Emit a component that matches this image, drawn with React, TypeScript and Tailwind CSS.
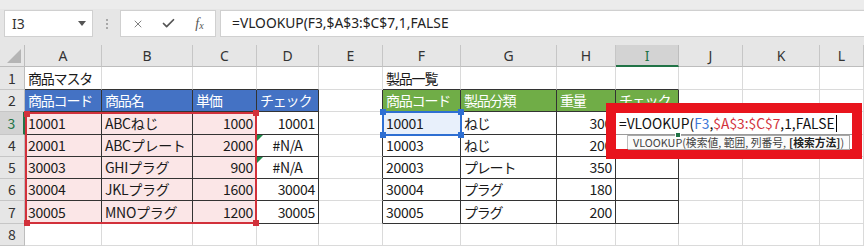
import { X, Check } from 'lucide-react';

const COLS = ['A', 'B', 'C', 'D', 'E', 'F', 'G', 'H', 'I', 'J', 'K', 'L'];

// rows 1..8, columns A..L
const ROWS: string[][] = [
  ['商品マスタ', '', '', '', '', '製品一覧'],
  ['商品コード', '商品名', '単価', 'チェック', '', '商品コード', '製品分類', '重量', 'チェック'],
  ['10001', 'ABCねじ', '1000', '10001', '', '10001', 'ねじ', '300'],
  ['20001', 'ABCプレート', '2000', '#N/A', '', '10003', 'ねじ', '200'],
  ['30003', 'GHIプラグ', '900', '#N/A', '', '20003', 'プレート', '350'],
  ['30004', 'JKLプラグ', '1600', '30004', '', '30004', 'プラグ', '180'],
  ['30005', 'MNOプラグ', '1200', '30005', '', '30005', 'プラグ', '200'],
  [],
];

const CELL_FONT = "font-['Noto_Sans_CJK_JP',sans-serif]";
const UI_FONT = "font-['Noto_Sans','Noto_Sans_CJK_JP',sans-serif]";

function Corner() {
  return (
    <div className="bg-[#e6e6e6] border-r border-b border-[#bdbdbd] flex items-end justify-end p-[3px]">
      <svg width="14" height="14" viewBox="0 0 14 14">
        <polygon points="14,0 14,14 0,14" fill="#b5b5b5" />
      </svg>
    </div>
  );
}

function ColHead({ label }: { label: string }) {
  const sel = label === 'I';
  return (
    <div
      className={
        sel
          ? 'bg-[#d3d3d3] text-[#217346] border-r border-r-[#bdbdbd] border-b-2 border-b-[#217346] flex items-center justify-center text-[14px]'
          : 'bg-[#e6e6e6] text-[#333] border-r border-r-[#c6c6c6] border-b border-b-[#bdbdbd] flex items-center justify-center text-[14px]'
      }
    >
      {label}
    </div>
  );
}

function RowHead({ r }: { r: number }) {
  const sel = r === 3;
  return (
    <div
      className={
        sel
          ? 'bg-[#d3d3d3] text-[#217346] border-r-2 border-r-[#217346] border-b border-b-[#c6c6c6] flex items-center justify-center text-[14px]'
          : 'bg-[#e6e6e6] text-[#333] border-r border-r-[#bdbdbd] border-b border-b-[#c6c6c6] flex items-center justify-center text-[14px]'
      }
    >
      {r}
    </div>
  );
}

function DataCell({ r, ci }: { r: number; ci: number }) {
  const text = ROWS[r - 1][ci] ?? '';
  const body = r >= 2 && r <= 7;
  const darkR = body && ci <= 8;
  const darkB = r <= 7 && (ci <= 3 || (ci >= 5 && ci <= 8));

  let bg = 'bg-white';
  let fg = 'text-[#1a1a1a]';
  if (r === 2 && ci <= 3) {
    bg = 'bg-[#4472c4]';
    fg = 'text-white';
  } else if (r === 2 && ci >= 5 && ci <= 8) {
    bg = 'bg-[#70ad47]';
    fg = 'text-white';
  } else if (r >= 3 && r <= 7 && ci <= 2) {
    bg = 'bg-[#fbe6e7]';
  } else if (r === 3 && ci === 5) {
    bg = 'bg-[#e8f0fb]';
  }

  const isErr = text === '#N/A';
  const right = r >= 3 && (ci === 2 || ci === 7 || (ci === 3 && !isErr));
  const align = isErr ? 'justify-center' : right ? 'justify-end' : 'justify-start';
  const onlyJa = /^[^\x00-\x7f]+$/.test(text);

  return (
    <div
      className={`relative flex items-center px-[3px] whitespace-nowrap overflow-hidden border-r border-b text-[14px] ${bg} ${fg} ${align} ${
        darkR ? 'border-r-[#333]' : 'border-r-[#dadada]'
      } ${darkB ? 'border-b-[#333]' : 'border-b-[#dadada]'} ${onlyJa ? 'tracking-[-1.2px]' : 'tracking-[-0.3px]'}`}
    >
      {isErr && (
        <svg className="absolute left-0 top-0" width="6" height="6" viewBox="0 0 6 6">
          <polygon points="0,0 6,0 0,6" fill="#1e8a4a" />
        </svg>
      )}
      {text}
    </div>
  );
}

function Handle({ className }: { className: string }) {
  return <div className={`absolute w-[6px] h-[6px] ${className}`} />;
}

export default function App() {
  return (
    <div className={`relative w-[864px] h-[246px] overflow-hidden bg-white ${UI_FONT}`}>
      {/* formula bar */}
      <div className="h-[45px] bg-[#e6e6e6] border-t-[9px] border-t-[#ececec] flex items-start pt-px pl-[4px]">
        <div className="w-[89px] h-[27px] bg-white border border-[#d0d0d0] flex items-center justify-between pl-[7px] pr-[6px] text-[14px] text-[#333]">
          <span>I3</span>
          <svg width="8" height="5" viewBox="0 0 8 5">
            <polygon points="0,0 8,0 4,5" fill="#555" />
          </svg>
        </div>
        <div className="w-[27px] h-[27px] flex flex-col items-center justify-center gap-[2px]">
          <span className="w-[2px] h-[2px] bg-[#a8a8a8]" />
          <span className="w-[2px] h-[2px] bg-[#a8a8a8]" />
          <span className="w-[2px] h-[2px] bg-[#a8a8a8]" />
        </div>
        <div className="w-[96px] h-[27px] bg-white border border-[#d0d0d0] flex items-center pl-px text-[#555]">
          <div className="w-[32px] flex justify-center">
            <X size={12} strokeWidth={1.5} />
          </div>
          <div className="w-[32px] flex justify-center">
            <Check size={15} strokeWidth={2.8} />
          </div>
          <div className="w-[32px] flex justify-center items-center font-['Liberation_Serif',serif] italic text-[14px] text-[#555]">
            f<span className="text-[10px] mt-[3px]">x</span>
          </div>
        </div>
        <div className="ml-[4px] flex-1 -mr-[2px] h-[27px] bg-white border border-[#d0d0d0] flex items-center pl-[11px] text-[13.8px] text-[#222]">
          =VLOOKUP(F3,$A$3:$C$7,1,FALSE
        </div>
      </div>

      {/* sheet grid */}
      <div className="grid grid-cols-[25px_77px_91px_64px_62px_64px_78px_96px_59px_63px_64px_77px_1fr] grid-rows-[22px_23px_22px_23px_22px_22px_22px_23px_1fr] h-[201px]">
        <Corner />
        {COLS.map((c) => (
          <ColHead key={c} label={c} />
        ))}
        {ROWS.map((_, ri) => (
          <div key={ri} className={`contents ${CELL_FONT}`}>
            <RowHead r={ri + 1} />
            {COLS.map((c, ci) => (
              <DataCell key={c} r={ri + 1} ci={ci} />
            ))}
          </div>
        ))}
      </div>

      {/* range reference $A$3:$C$7 */}
      <div className="absolute left-[25px] top-[112px] w-[232px] h-[112px] border-2 border-[#d2313b]">
        <Handle className="-left-[3px] -top-[3px] bg-[#d2313b]" />
        <Handle className="-right-[4px] -top-[4px] bg-[#d2313b]" />
        <Handle className="-left-[3px] -bottom-[4px] bg-[#d2313b]" />
        <Handle className="-right-[4px] -bottom-[4px] bg-[#d2313b]" />
      </div>

      {/* range reference F3 */}
      <div className="absolute left-[382px] top-[111px] w-[80px] h-[25px] border-2 border-[#2e6fd2]">
        <Handle className="-left-[4px] -top-[4px] bg-[#2e6fd2]" />
        <Handle className="-right-[4px] -top-[4px] bg-[#2e6fd2]" />
        <Handle className="-left-[4px] -bottom-[4px] bg-[#2e6fd2]" />
        <Handle className="-right-[4px] -bottom-[4px] bg-[#2e6fd2]" />
      </div>

      {/* highlighted in-cell edit */}
      <div className="absolute left-[606px] top-[103px] w-[256px] h-[56px] border-[10px] border-[#e8141d] bg-white">
        <div className="relative h-[22px] border-b border-[#9a9a9a] flex items-center pl-[3px] text-[13.8px] text-[#111] font-['Noto_Sans_CJK_JP',sans-serif] whitespace-nowrap">
          <span>=VLOOKUP(</span>
          <span className="text-[#3b78d6]">F3</span>
          <span>,</span>
          <span className="text-[#d2313b]">$A$3:$C$7</span>
          <span>,1,FALSE</span>
          <span className="w-px h-[17px] bg-black ml-px" />
          <div className="absolute left-[59px] -bottom-[4px] w-[6px] h-[6px] bg-[#217346] border border-white" />
        </div>
        <div className="flex h-[14px]">
          <div className="w-[12px] border-r border-[#bdbdbd]" />
          <div className="w-[222px] h-[15px] bg-[#fbfbfb] border border-l-0 border-[#a8a8a8] flex items-center pl-[5px] text-[10.8px] text-[#444] font-['Noto_Sans_CJK_JP',sans-serif] whitespace-nowrap">
            VLOOKUP(検索値, 範囲, 列番号, <b className="font-bold text-[#222] ml-[3px]">[検索方法]</b>)
          </div>
        </div>
      </div>
    </div>
  );
}
